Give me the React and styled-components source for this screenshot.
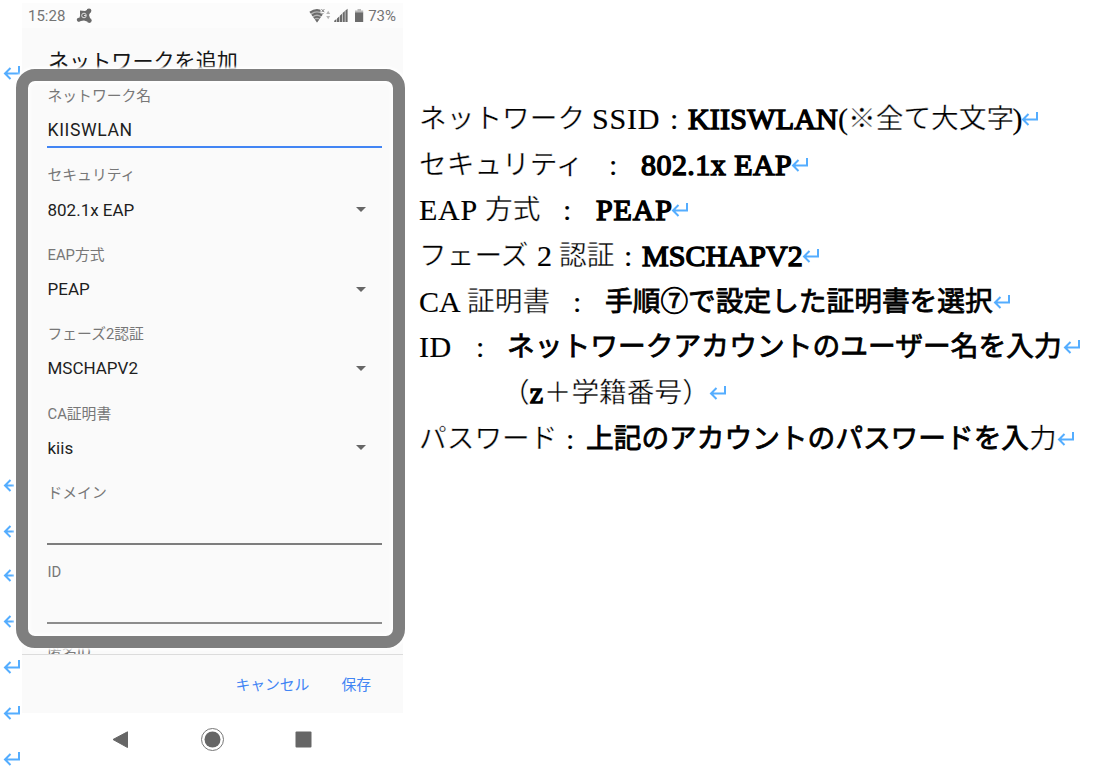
import React from "react";
import styled, { createGlobalStyle } from "styled-components";

const GlobalStyle = createGlobalStyle`
  * { box-sizing: border-box; }
  body { margin: 0; background: #fff; }
`;

const ui = `Roboto, "Noto Sans CJK JP", sans-serif`;
const serif = `"Liberation Serif", "Noto Sans CJK JP", serif`;

const Page = styled.div`
  display: flex;
  width: 1116px;
  height: 780px;
  overflow: hidden;
  background: #fff;
`;

const Gutter = styled.div`
  display: flex;
  flex-direction: column;
  width: 22px;
  padding: 65px 0 0 3px;
`;

const MarkBox = styled.div`
  flex: none;
  height: 16px;
  width: ${(p) => (p.$cut ? "11px" : "18px")};
  margin-top: ${(p) => p.$gap || 0}px;
  overflow: hidden;
`;

const MarkSvg = styled.svg`
  display: block;
  flex: none;
`;

const Phone = styled.div`
  position: relative;
  display: flex;
  flex-direction: column;
  width: 381px;
  height: 777px;
  margin-top: 3px;
  font-family: ${ui};
`;

const StatusBar = styled.div`
  display: flex;
  align-items: center;
  height: 25px;
  padding: 1px 7px 0 6px;
  background: #fcfcfc;
  color: #747474;
  font-size: 15px;
  line-height: 20px;
`;

const AppIcon = styled.svg`
  margin-left: 11px;
`;

const StatusRight = styled.div`
  display: flex;
  align-items: center;
  gap: 3px;
  margin-left: auto;
`;

const Dialog = styled.div`
  display: flex;
  flex-direction: column;
  height: 626px;
  overflow: hidden;
  background: #fafafa;
`;

const Title = styled.div`
  flex: none;
  height: 56px;
  padding: 19px 0 0 26px;
  color: #161616;
  font-size: 21.1px;
  line-height: 30px;
`;

const Field = styled.div`
  flex: none;
  height: 79.4px;
  padding: 0 21px 0 25px;
`;

const Label = styled.div`
  height: 22px;
  padding-left: 0.5px;
  color: #777;
  font-size: 14.8px;
  line-height: 24px;
`;

const Value = styled.div`
  display: flex;
  align-items: center;
  justify-content: space-between;
  height: 41.6px;
  padding: 9px 16px 0 0.5px;
  color: #1e1e1e;
  font-size: ${(p) => p.$size || 17}px;
  letter-spacing: ${(p) => p.$ls || 0}px;
  border-bottom: 2px solid ${(p) => p.$line || "transparent"};
`;

const Caret = styled.span`
  border: 5.5px solid transparent;
  border-top-color: #666;
  border-bottom: 0;
`;

const Actions = styled.div`
  display: flex;
  justify-content: flex-end;
  gap: 32px;
  height: 59px;
  padding: 18px 32px 0 0;
  border-top: 1px solid #dcdcdc;
  background: #fafafa;
  color: #4285f4;
  font-size: 14.8px;
  line-height: 25px;
`;

const NavBar = styled.div`
  display: flex;
  align-items: center;
  height: 53px;
  padding: 0 91px 0 90px;
  justify-content: space-between;
`;

const Highlight = styled.div`
  position: absolute;
  left: -6px;
  top: 66px;
  width: 389px;
  height: 579px;
  border: 12px solid #7f7f7f;
  border-radius: 19px;
  box-shadow: inset 0 0 4px 2px #fff, 0 0 3px 2px #fff;
`;

const Notes = styled.div`
  display: flex;
  flex-direction: column;
  padding: 96px 0 0 16px;
`;

const Line = styled.div`
  display: flex;
  height: 45.7px;
  line-height: 46px;
  color: #000;
  font-family: ${serif};
  white-space: pre;
`;

const stroke = (p) => {
  if (p.$cjk) return p.$b ? "0.8px #000" : "0.35px #fff";
  return p.$b ? "1.4px #000" : "0.2px #000";
};

const Run = styled.span`
  flex: none;
  width: ${(p) => p.$w}px;
  padding-left: ${(p) => p.$in || 0}px;
  font-size: ${(p) => (p.$cjk ? 27.7 : 30)}px;
  letter-spacing: ${(p) => p.$ls || 0}px;
  -webkit-text-stroke: ${stroke};
`;

const NoteMark = styled.span`
  padding-top: 15px;
`;

const Mark = () => (
  <MarkSvg width="18" height="16" fill="none" stroke="#54adff" strokeWidth="2">
    <path d="M16 1V8.5H2M7.5 3L2 8.5L7.5 14" />
  </MarkSvg>
);

const gutterMarks = [
  [0, false], [396, true], [30, true], [28, true], [30, true],
  [30, false], [30, false], [30, false],
];

const fields = [
  { label: "ネットワーク名", value: "KIISWLAN", line: "#4285f4", size: 17.6, ls: 0.6 },
  { label: "セキュリティ", value: "802.1x EAP", caret: true },
  { label: "EAP方式", value: "PEAP", caret: true },
  { label: "フェーズ2認証", value: "MSCHAPV2", caret: true },
  { label: "CA証明書", value: "kiis", caret: true },
  { label: "ドメイン", value: "", line: "#7d7d7d" },
  { label: "ID", value: "", line: "#8d8d8d" },
  { label: "匿名ID", value: "" },
];

const notes = [
  [
    { t: "ネットワーク", w: 173, cjk: 1 }, { t: "SSID", w: 78, ls: 0.8 }, { t: ":", w: 18 },
    { t: "KIISWLAN", w: 150, b: 1, ls: 0.2 }, { t: "(", w: 10 },
    { t: "※全て大文字", w: 164.5, cjk: 1 }, { t: ")", w: 8 },
  ],
  [
    { t: "セキュリティ", w: 190, cjk: 1 }, { t: ":", w: 32 },
    { t: "802.1x EAP", w: 150, b: 1, ls: 0.45 },
  ],
  [
    { t: "EAP", w: 66, ls: 0.7 }, { t: "方式", w: 78, cjk: 1 }, { t: ":", w: 33 },
    { t: "PEAP", w: 75, b: 1, ls: 0.9 },
  ],
  [
    { t: "フェーズ", w: 118, cjk: 1 }, { t: "2", w: 22 }, { t: "認証", w: 65, cjk: 1 },
    { t: ":", w: 18 }, { t: "MSCHAPV2", w: 159.5, b: 1, ls: 0.1 },
  ],
  [
    { t: "CA", w: 48 }, { t: "証明書", w: 106, cjk: 1 }, { t: ":", w: 32 },
    { t: "手順⑦で設定した証明書を選択", w: 388, cjk: 1, b: 1 },
  ],
  [
    { t: "ID", w: 57, ls: 0.5 }, { t: ":", w: 31 },
    { t: "ネットワークアカウントのユーザー名を入力", w: 556, cjk: 1, b: 1, ls: 0.08 },
  ],
  [
    { t: "（", w: 27.7, cjk: 1, skip: 83 }, { t: "z", w: 14, b: 1 },
    { t: "＋学籍番号）", w: 165, cjk: 1 },
  ],
  [
    { t: "パスワード", w: 147, cjk: 1 }, { t: ":", w: 20 },
    { t: "上記のアカウントのパスワードを入", w: 443, cjk: 1, b: 1 }, { t: "力", w: 28, cjk: 1 },
  ],
];

export default function App() {
  return (
    <Page>
      <GlobalStyle />
      <Gutter>
        {gutterMarks.map(([gap, cut], i) => (
          <MarkBox key={i} $gap={gap} $cut={cut}><Mark /></MarkBox>
        ))}
      </Gutter>
      <Phone>
        <StatusBar>
          15:28
          <AppIcon width="17" height="16" viewBox="0 0 17 16" fill="#6a6a6a">
            <path d="M4 2.5L9 3L12 1.5L14.5 4L13 7L14.5 11.5L11 13.5L8 12.5L2 13.5L4 8Z" />
            <circle cx="13" cy="2.8" r="2.4" />
            <circle cx="13.3" cy="12.6" r="2.4" />
            <circle cx="2.8" cy="11.8" r="2" />
            <circle cx="8" cy="7.5" r="2.3" fill="none" stroke="#ddd" strokeWidth="1" />
            <path d="M8 7.5h2" stroke="#ddd" />
          </AppIcon>
          <StatusRight>
            <svg width="56" height="16" viewBox="0 0 56 16" fill="#6b6b6b">
              <path d="M1 4.6Q8 -1 15 4.6L8 14.5Z" fill="#b5b5b5" />
              <path d="M1 4.6Q8 -.2 15 4.6" fill="none" stroke="#6b6b6b" strokeWidth="2.2" />
              <path d="M3 7.4Q8 3.6 13 7.4" fill="none" stroke="#6b6b6b" strokeWidth="1.9" />
              <path d="M4.8 10Q8 7.8 11.2 10" fill="none" stroke="#6b6b6b" strokeWidth="1.7" />
              <path d="M5.8 11.2H10.4L8 14.5Z" />
              <path d="M11.5 0H17V5H11.5Z" fill="#fcfcfc" />
              <path d="M12.5 1.2L15.3 4.2M15.3 1.2L12.5 4.2" stroke="#777" fill="none" />
              <path d="M17.2 6L19.2 2.8L21.2 6ZM17.2 8L19.2 11.2L21.2 8Z" fill="#b5b5b5" />
              <path d="M25.2 14v-1.2l2.2-1.7V14ZM28 14v-3.6l2.2-1.9V14ZM30.8 14V7.7l2.2-2V14ZM33.6 14V5L35.8 3V14ZM36.4 14V2.6L38.6 .8V14Z" />
              <path d="M48.5 1h3.5v1.5h2.2V5h-8.2V2.5h2.5Z" fill="#b8b8b8" />
              <path d="M46 4.5h8.2V14H46Z" />
            </svg>
            73%
          </StatusRight>
        </StatusBar>
        <Dialog>
          <Title>ネットワークを追加</Title>
          {fields.map((f) => (
            <Field key={f.label}>
              <Label>{f.label}</Label>
              <Value $line={f.line} $ls={f.ls} $size={f.size}>{f.value}{f.caret && <Caret />}</Value>
            </Field>
          ))}
        </Dialog>
        <Actions><span>キャンセル</span><span>保存</span></Actions>
        <NavBar>
          <svg width="17" height="18" fill="#666"><path d="M1 8.5L15.5 .8V16.5Z" stroke="#666" strokeLinejoin="round" /></svg>
          <svg width="24" height="24"><circle cx="12.5" cy="11.5" r="11" fill="none" stroke="#777" /><circle cx="12.5" cy="11.5" r="8" fill="#666" /></svg>
          <svg width="17" height="17"><rect x=".5" y=".5" width="16" height="16" rx="1" fill="#666" /></svg>
        </NavBar>
        <Highlight />
      </Phone>
      <Notes>
        {notes.map((runs, i) => (
          <Line key={i}>
            {runs.map((r, j) => (
              <Run key={j} $w={r.w + (r.skip || 0)} $in={r.skip} $ls={r.ls} $cjk={r.cjk} $b={r.b}>{r.t}</Run>
            ))}
            <NoteMark><Mark /></NoteMark>
          </Line>
        ))}
      </Notes>
    </Page>
  );
}
